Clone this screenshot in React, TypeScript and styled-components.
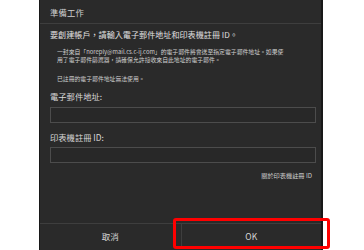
import React from "react";
import styled, { createGlobalStyle } from "styled-components";

const Global = createGlobalStyle`
  html, body { margin: 0; padding: 0; background: #ffffff; overflow: hidden; }
  body { font-family: "Noto Sans CJK TC", "Noto Sans", sans-serif; }
`;

const Page = styled.div`
  position: relative;
  width: 364px;
  height: 250px;
  overflow: hidden;
  background: #ffffff;
`;

const Dialog = styled.div`
  margin-left: 39px;
  width: 284px;
  height: 262px;
  box-sizing: border-box;
  background: #2a2a2a;
  border-left: 1px solid #181818;
  border-right: 2px solid #181818;
  display: flex;
  flex-direction: column;
  color: #e2e2e2;
`;

const TitleBar = styled.div`
  height: 24px;
  box-sizing: border-box;
  padding-left: 10px;
  border-bottom: 1px solid #3e3e3e;
  display: flex;
  align-items: center;
  font-size: 8.3px;
  color: #d0d0d0;
  letter-spacing: 0.2px;
`;

const Content = styled.div`
  height: 199px;
  box-sizing: border-box;
  padding: 0 5px 0 10px;
  display: flex;
  flex-direction: column;
`;

const Lead = styled.div`
  margin-top: 5px;
  font-size: 8.1px;
  line-height: 12px;
  white-space: nowrap;
  color: #e0e0e0;
`;

const Note = styled.div<{ $gap: number }>`
  margin-top: ${(p) => p.$gap}px;
  padding-left: 7px;
  font-size: 5.85px;
  line-height: 8px;
  white-space: nowrap;
  color: #cfcfcf;
`;

const Label = styled.div<{ $gap: number }>`
  margin-top: ${(p) => p.$gap}px;
  font-size: 8.3px;
  line-height: 12px;
  color: #d8d8d8;
`;

const Field = styled.div<{ $gap: number }>`
  margin-top: ${(p) => p.$gap}px;
  height: 16px;
  box-sizing: border-box;
  border: 1px solid #4c4c4c;
  background: #282828;
`;

const LinkRow = styled.div`
  margin-top: 9px;
  padding-right: 4px;
  text-align: right;
  font-size: 6.2px;
  line-height: 8px;
  color: #cfcfcf;
`;

const Footer = styled.div`
  border-top: 1px solid #3e3e3e;
  display: grid;
  grid-template-columns: 1fr 1fr;
  height: 30px;
`;

const FooterButton = styled.div<{ $divider?: boolean }>`
  height: 24px;
  line-height: 24px;
  text-align: center;
  font-size: 8.5px;
  color: #d8d8d8;
  border-left: ${(p) => (p.$divider ? "1px solid #3e3e3e" : "none")};
`;

const Highlight = styled.div`
  position: absolute;
  left: 173px;
  top: 218px;
  width: 157px;
  height: 31px;
  box-sizing: border-box;
  border: 3px solid #ff0000;
  border-radius: 3px;
  pointer-events: none;
`;

export default function App() {
  return (
    <Page>
      <Global />
      <Dialog>
        <TitleBar>準備工作</TitleBar>
        <Content>
          <Lead>要創建帳戶，請輸入電子郵件地址和印表機註冊 ID。</Lead>
          <Note $gap={7}>
            一封來自「noreply@mail.cs.c-ij.com」的電子郵件將會送至指定電子郵件地址。如果使
            <br />
            用了電子郵件篩選器，請確保允許接收來自此地址的電子郵件。
          </Note>
          <Note $gap={11}>已註冊的電子郵件地址無法使用。</Note>
          <Label $gap={7}>電子郵件地址:</Label>
          <Field $gap={5} />
          <Label $gap={8}>印表機註冊 ID:</Label>
          <Field $gap={4} />
          <LinkRow>關於印表機註冊 ID</LinkRow>
        </Content>
        <Footer>
          <FooterButton>取消</FooterButton>
          <FooterButton $divider>OK</FooterButton>
        </Footer>
      </Dialog>
      <Highlight />
    </Page>
  );
}
